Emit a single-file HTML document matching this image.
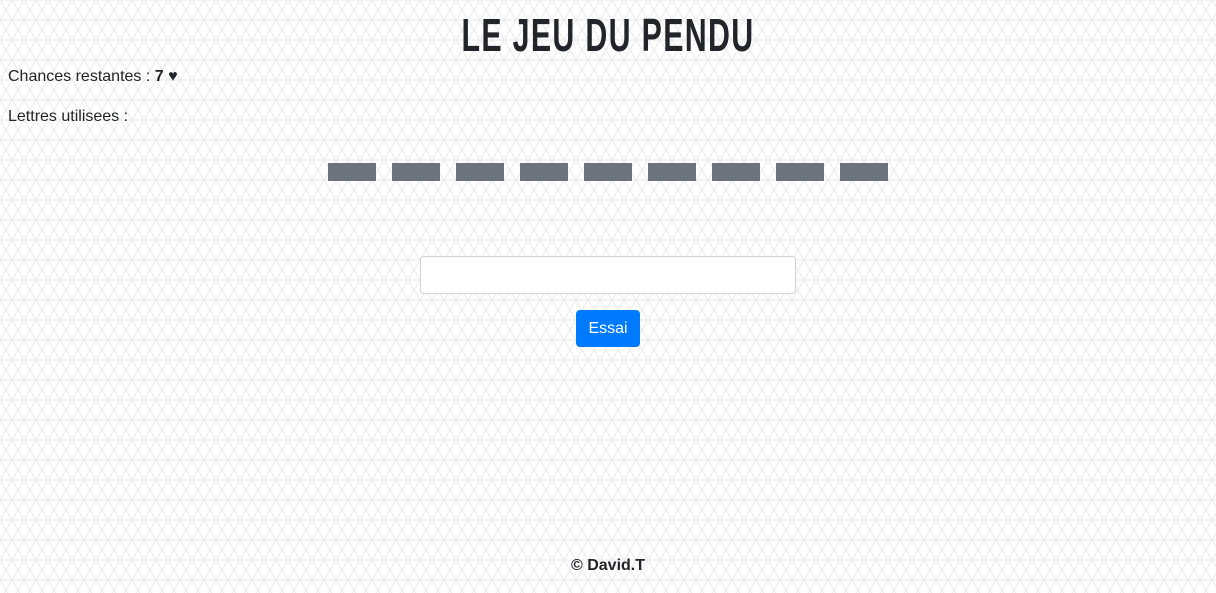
<!DOCTYPE html>
<html><head><meta charset="utf-8"><style>
html,body{margin:0;width:1216px;height:593px;overflow:hidden}
body{font-family:"Liberation Sans",sans-serif;font-size:16px;color:#212529;position:relative;background:#fff}
svg.bg{position:absolute;left:0;top:0}
.t{position:absolute;left:0;width:1216px;text-align:center;top:8px;font-family:"Liberation Sans Narrow","Liberation Sans",sans-serif;font-weight:bold;font-size:46px;letter-spacing:2px;color:#212529;transform:scaleX(0.66)}
.p{position:absolute;left:8px}
.d{position:absolute;top:163px;width:48px;height:18px;background:#6c757d}
.in{position:absolute;left:420px;top:256px;width:374px;height:36px;border:1px solid #ced4da;border-radius:4px;background:#fff}
.b{position:absolute;left:576px;top:310px;width:64px;height:37px;background:#007bff;border-radius:4px;color:#fff;text-align:center;line-height:38px}
.f{position:absolute;left:0;width:1216px;text-align:center;top:557px;font-weight:bold}
</style></head><body>
<svg class="bg" width="1216" height="593"><defs><pattern id="p" width="24" height="40" patternUnits="userSpaceOnUse">
<g stroke="#ececec" stroke-width="1.2" fill="none">
<path d="M0 0H24M0 20H24M0 40H24M0 0L12 20L0 40M24 0L12 20L24 40M12 0L0 20M12 0L24 20M12 40L0 20M12 40L24 20"/>
</g></pattern></defs><rect width="1216" height="593" fill="url(#p)"/></svg>
<div class="t">LE JEU DU PENDU</div>
<div class="p" style="top:68px">Chances restantes : <b>7 ♥</b></div>
<div class="p" style="top:108px">Lettres utilisees :</div>
<div class="d" style="left:328px"></div><div class="d" style="left:392px"></div><div class="d" style="left:456px"></div><div class="d" style="left:520px"></div><div class="d" style="left:584px"></div><div class="d" style="left:648px"></div><div class="d" style="left:712px"></div><div class="d" style="left:776px"></div><div class="d" style="left:840px"></div>
<div class="in"></div>
<div class="b">Essai</div>
<div class="f">© David.T</div>
</body></html>
